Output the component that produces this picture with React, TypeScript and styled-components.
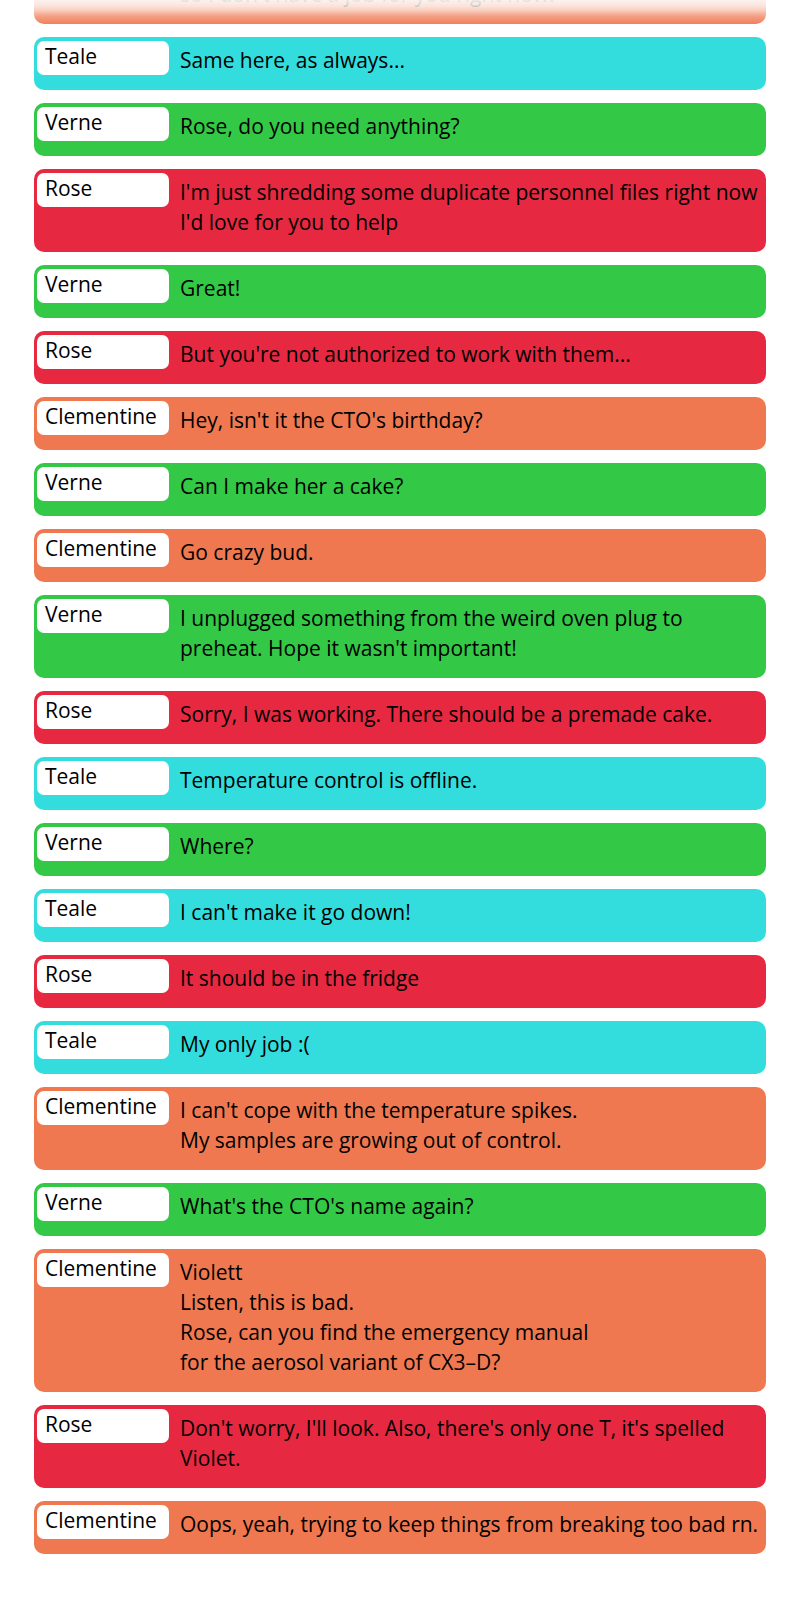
import React from "react";
import styled, { createGlobalStyle } from "styled-components";

const GlobalStyle = createGlobalStyle`
  * { box-sizing: border-box; }
  body {
    margin: 0;
    background: #fff;
    color: #000;
    font-family: "Lucida Grande", "Open Sans", sans-serif;
    font-size: 21px;
    line-height: 30px;
  }
`;

const palette = {
  Teale: "#33dddd",
  Verne: "#33c946",
  Rose: "#e62940",
  Clementine: "#ef7850",
};

type Speaker = keyof typeof palette;

type Message = { from: Speaker; lines: string[]; continued?: boolean };

const Viewport = styled.main`
  position: relative;
  display: flex;
  flex-direction: column;
  justify-content: flex-end;
  height: 100vh;
  padding: 0 34px 46px;
  overflow: hidden;
`;

const Log = styled.ol`
  display: flex;
  flex-direction: column;
  gap: 13px;
  margin: 0;
  padding: 0;
  list-style: none;
`;

const Bubble = styled.li<{ $from: Speaker }>`
  display: grid;
  grid-template-columns: 132px 1fr;
  column-gap: 11px;
  align-items: start;
  padding: 4px 0 4px 3px;
  border-radius: 10px;
  background: ${({ $from }) => palette[$from]};
`;

const NameTag = styled.span`
  height: 34px;
  padding: 0 8px;
  border-radius: 7px;
  background: #fff;
`;

const Text = styled.p`
  grid-column: 2;
  margin: 0;
  padding: 4px 0 11px;
`;

const Line = styled.span`
  display: block;

  @media (min-width: 800px) {
    white-space: nowrap;
  }
`;

const TopFade = styled.div`
  position: absolute;
  inset: 0 0 auto;
  height: 26px;
  background: linear-gradient(
    rgba(255, 255, 255, 0.9),
    rgba(255, 255, 255, 0.8) 6px,
    rgba(255, 255, 255, 0.65) 10px,
    rgba(255, 255, 255, 0.3) 16px,
    rgba(255, 255, 255, 0)
  );
`;

const messages: Message[] = [
  { from: "Clementine", lines: ["so I don't have a job for you right now!"], continued: true },
  { from: "Teale", lines: ["Same here, as always..."] },
  { from: "Verne", lines: ["Rose, do you need anything?"] },
  { from: "Rose", lines: ["I'm just shredding some duplicate personnel files right now", "I'd love for you to help"] },
  { from: "Verne", lines: ["Great!"] },
  { from: "Rose", lines: ["But you're not authorized to work with them..."] },
  { from: "Clementine", lines: ["Hey, isn't it the CTO's birthday?"] },
  { from: "Verne", lines: ["Can I make her a cake?"] },
  { from: "Clementine", lines: ["Go crazy bud."] },
  { from: "Verne", lines: ["I unplugged something from the weird oven plug to", "preheat. Hope it wasn't important!"] },
  { from: "Rose", lines: ["Sorry, I was working. There should be a premade cake."] },
  { from: "Teale", lines: ["Temperature control is offline."] },
  { from: "Verne", lines: ["Where?"] },
  { from: "Teale", lines: ["I can't make it go down!"] },
  { from: "Rose", lines: ["It should be in the fridge"] },
  { from: "Teale", lines: ["My only job :("] },
  { from: "Clementine", lines: ["I can't cope with the temperature spikes.", "My samples are growing out of control."] },
  { from: "Verne", lines: ["What's the CTO's name again?"] },
  {
    from: "Clementine",
    lines: ["Violett", "Listen, this is bad.", "Rose, can you find the emergency manual", "for the aerosol variant of CX3–D?"],
  },
  { from: "Rose", lines: ["Don't worry, I'll look. Also, there's only one T, it's spelled", "Violet."] },
  { from: "Clementine", lines: ["Oops, yeah, trying to keep things from breaking too bad rn."] },
];

export default function App() {
  return (
    <Viewport>
      <GlobalStyle />
      <Log>
        {messages.map(({ from, lines, continued }, index) => (
          <Bubble key={index} $from={from}>
            {!continued && <NameTag>{from}</NameTag>}
            <Text>
              {lines.map((line) => (
                <Line key={line}>{line}</Line>
              ))}
            </Text>
          </Bubble>
        ))}
      </Log>
      <TopFade />
    </Viewport>
  );
}
